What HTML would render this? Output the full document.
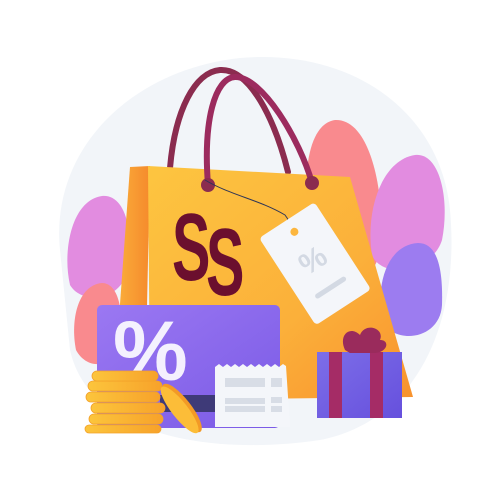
<!DOCTYPE html>
<html><head><style>html,body{margin:0;padding:0;background:#fff;}svg{display:block}</style></head>
<body>
<svg width="500" height="500" viewBox="0 0 500 500" xmlns="http://www.w3.org/2000/svg">
<defs>
<linearGradient id="bag" x1="0" y1="0" x2="1" y2="1"><stop offset="0" stop-color="#fdc540"/><stop offset="0.6" stop-color="#fbb03a"/><stop offset="1" stop-color="#f8922e"/></linearGradient>
<linearGradient id="side" x1="0" y1="0" x2="1" y2="0"><stop offset="0" stop-color="#fbb23c"/><stop offset="1" stop-color="#f58a2c"/></linearGradient>
<linearGradient id="card" x1="0" y1="0" x2="1" y2="1"><stop offset="0" stop-color="#9b78f2"/><stop offset="1" stop-color="#7a5ae6"/></linearGradient>
<linearGradient id="coin" x1="0" y1="0" x2="1" y2="0"><stop offset="0" stop-color="#fcc53c"/><stop offset="1" stop-color="#f7a22a"/></linearGradient>
<linearGradient id="gift" x1="0" y1="0" x2="1" y2="1"><stop offset="0" stop-color="#7d6ee8"/><stop offset="1" stop-color="#6650dd"/></linearGradient>
</defs>
<path d="M60 250 C50 150 130 70 240 58 C350 48 440 110 450 210 C460 320 420 420 320 440 C220 455 90 440 70 350 Z" fill="#f2f5f9"/>
<!-- leaves -->
<path d="M335 120 C300 125 300 210 318 270 C338 292 375 285 380 250 C386 200 372 118 335 120 Z" fill="#f98a8e"/>
<path d="M415 155 C382 160 365 210 372 255 C382 280 432 272 442 240 C450 200 440 152 415 155 Z" fill="#e28ce0"/>
<path d="M418 243 C385 245 375 290 383 322 C395 345 440 340 442 305 C443 270 438 243 418 243 Z" fill="#9c7cf0"/>
<path d="M102 196 C72 200 62 250 70 285 C82 305 120 302 128 270 C134 230 125 194 102 196 Z" fill="#e28ce0"/>
<path d="M102 283 C78 285 70 320 76 350 C88 372 115 368 120 340 C124 310 118 283 102 283 Z" fill="#f98a8e"/>
<!-- back handle -->
<path d="M170 168 C175 110 195 72 220 70 C250 68 275 120 288 172" fill="none" stroke="#8b2c4f" stroke-width="6" stroke-linecap="round"/>
<!-- bag -->
<path d="M130 167 L150 166 L145 400 L113 400 Z" fill="url(#side)"/>
<path d="M148 166 L350 177 L413 397 L150 400 Z" fill="url(#bag)"/>
<!-- front handle -->
<path d="M208 185 C203 120 215 78 235 77 C262 76 300 140 312 183" fill="none" stroke="#9c2b5e" stroke-width="6" stroke-linecap="round"/>
<circle cx="208" cy="185" r="7" fill="#8b2c4f"/>
<circle cx="312" cy="183" r="7" fill="#8b2c4f"/>
<path d="M205 180 C230 195 260 200 285 215 C293 225 290 235 285 238" fill="none" stroke="#2e3557" stroke-width="1"/>
<!-- S S -->
<text transform="translate(172,280) scale(0.6,1)" font-family="Liberation Sans, sans-serif" font-weight="bold" font-size="96" fill="#6b0f2e">S</text>
<text transform="translate(206,295) scale(0.6,1)" font-family="Liberation Sans, sans-serif" font-weight="bold" font-size="96" fill="#6b0f2e">S</text>
<!-- tag -->
<g transform="translate(314,262) rotate(-33)">
<rect x="-33" y="-50" width="66" height="104" rx="4" fill="#f4f6fa"/>
<circle cx="0" cy="-36" r="4" fill="#fcb63e"/>
<text x="0" y="8" text-anchor="middle" font-family="Liberation Sans, sans-serif" font-size="30" fill="#d3d9e3" font-weight="bold">%</text>
<rect x="-18" y="28" width="36" height="5" rx="2.5" fill="#d3d9e3"/>
</g>
<!-- card -->
<rect x="97" y="305" width="183" height="123" rx="5" fill="url(#card)"/>
<rect x="160" y="395" width="60" height="17" fill="#3e3a78"/>
<text x="113" y="380" font-family="Liberation Sans, sans-serif" font-weight="bold" font-size="84" fill="#fff" fill-opacity="0.9">%</text>
<!-- receipt -->
<path d="M215 367 l4 -3 l4 3 l4 -3 l4 3 l4 -3 l4 3 l4 -3 l4 3 l4 -3 l4 3 l4 -3 l4 3 l4 -3 l4 3 l4 -3 l4 3 l4 -3 l3 2 L290 427 L215 427 Z" fill="#f4f6fa"/>
<rect x="225" y="378" width="40" height="9" fill="#d8dde6"/><rect x="271" y="378" width="11" height="9" fill="#d8dde6"/>
<rect x="225" y="398" width="40" height="6" fill="#d8dde6"/><rect x="271" y="397" width="11" height="6" fill="#d8dde6"/>
<rect x="225" y="406" width="40" height="6" fill="#d8dde6"/><rect x="271" y="406" width="11" height="6" fill="#d8dde6"/>
<!-- coins -->
<g fill="url(#coin)" stroke="#f3a12a" stroke-width="0.8">
<rect x="85" y="425" width="76" height="8" rx="4"/>
<rect x="89" y="414" width="74" height="10" rx="5"/>
<rect x="91" y="403" width="74" height="10" rx="5"/>
<rect x="86" y="392" width="74" height="10" rx="5"/>
<rect x="88" y="381" width="74" height="10" rx="5"/>
<rect x="92" y="371" width="66" height="10" rx="5"/>
</g>
<g transform="translate(182,408) rotate(-38)"><ellipse cx="0" cy="0" rx="9" ry="30" fill="#f39a26"/><ellipse cx="-3" cy="0" rx="8" ry="29" fill="#fcbd38"/></g>
<!-- gift -->
<rect x="317" y="352" width="85" height="66" fill="url(#gift)"/>
<rect x="329" y="352" width="13" height="66" fill="#a52c66"/>
<rect x="370" y="352" width="13" height="66" fill="#a52c66"/>
<path d="M345 350 C338 335 350 325 360 335 C365 322 385 328 380 340 C390 340 388 352 375 353 L350 353 Z" fill="#9a2b5c"/>
</svg>
</body></html>
